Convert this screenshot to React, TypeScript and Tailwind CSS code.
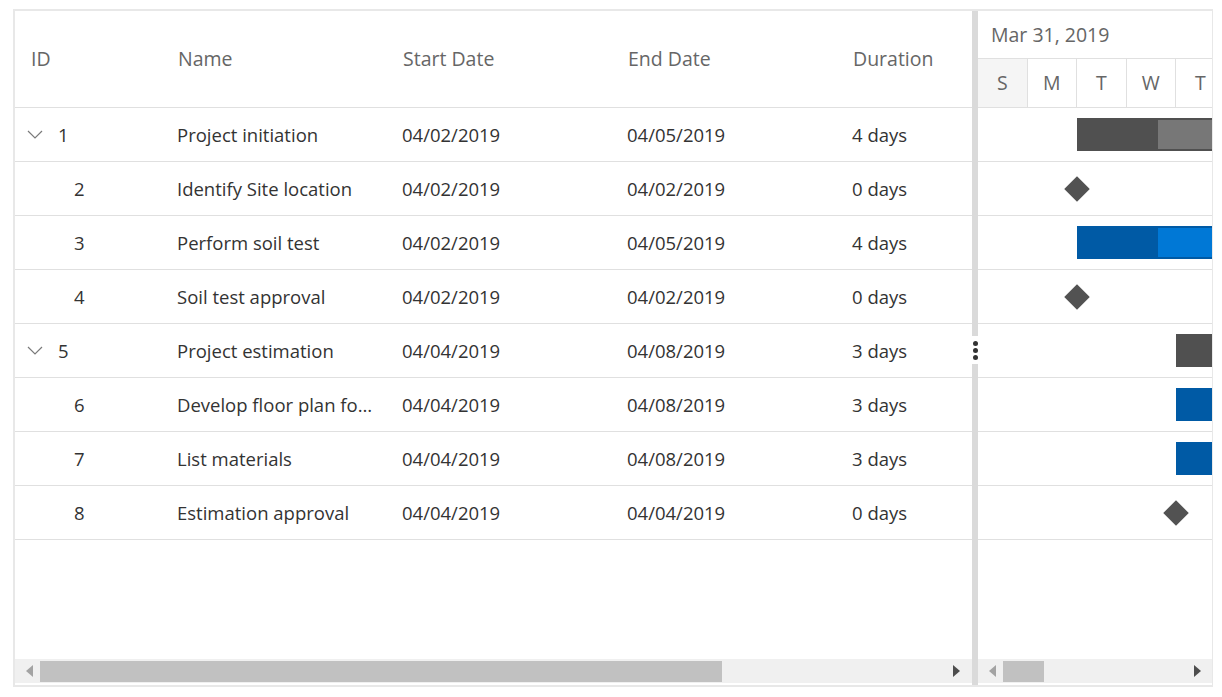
import React from 'react'

type Task = {
  id: number
  name: string
  start: string
  end: string
  duration: string
  parent?: boolean
  kind: 'parent' | 'task' | 'milestone'
  left: number
  width?: number
  progress?: number
}

const tasks: Task[] = [
  { id: 1, name: 'Project initiation', start: '04/02/2019', end: '04/05/2019', duration: '4 days', parent: true, kind: 'parent', left: 99, width: 198, progress: 81 },
  { id: 2, name: 'Identify Site location', start: '04/02/2019', end: '04/02/2019', duration: '0 days', kind: 'milestone', left: 99 },
  { id: 3, name: 'Perform soil test', start: '04/02/2019', end: '04/05/2019', duration: '4 days', kind: 'task', left: 99, width: 198, progress: 81 },
  { id: 4, name: 'Soil test approval', start: '04/02/2019', end: '04/02/2019', duration: '0 days', kind: 'milestone', left: 99 },
  { id: 5, name: 'Project estimation', start: '04/04/2019', end: '04/08/2019', duration: '3 days', parent: true, kind: 'parent', left: 198, width: 148, progress: 100 },
  { id: 6, name: 'Develop floor plan for estimation', start: '04/04/2019', end: '04/08/2019', duration: '3 days', kind: 'task', left: 198, width: 148, progress: 100 },
  { id: 7, name: 'List materials', start: '04/04/2019', end: '04/08/2019', duration: '3 days', kind: 'task', left: 198, width: 148, progress: 100 },
  { id: 8, name: 'Estimation approval', start: '04/04/2019', end: '04/04/2019', duration: '0 days', kind: 'milestone', left: 198 },
]

const days = ['S', 'M', 'T', 'W', 'T', 'F', 'S']

const Chevron = () => (
  <svg width="16" height="9" viewBox="0 0 16 9" className="shrink-0">
    <path d="M1 1 L8 8 L15 1" fill="none" stroke="#7a7a7a" strokeWidth="1.2" />
  </svg>
)

const ArrowLeft = ({ dark }: { dark?: boolean }) => (
  <svg width="7" height="12" viewBox="0 0 7 12">
    <path d="M7 0 L0 6 L7 12 Z" fill={dark ? '#4d4d4d' : '#a3a3a3'} />
  </svg>
)

const ArrowRight = ({ dark }: { dark?: boolean }) => (
  <svg width="7" height="12" viewBox="0 0 7 12">
    <path d="M0 0 L7 6 L0 12 Z" fill={dark ? '#4d4d4d' : '#a3a3a3'} />
  </svg>
)

const Bar = ({ t }: { t: Task }) => {
  if (t.kind === 'milestone') {
    return (
      <div
        className="absolute top-1/2 w-[18px] h-[18px] bg-[#525252] rotate-45"
        style={{ left: t.left - 9, marginTop: -9 }}
      />
    )
  }
  const isParent = t.kind === 'parent'
  return (
    <div
      className={`absolute top-[10px] h-[33px] border-2 ${isParent ? 'bg-[#777777] border-[#505050]' : 'bg-[#0078d6] border-[#005aa5]'}`}
      style={{ left: t.left, width: t.width }}
    >
      <div className={`h-full ${isParent ? 'bg-[#505050]' : 'bg-[#005aa5]'}`} style={{ width: t.progress ? t.progress - 2 : 0 }} />
    </div>
  )
}

export default function App() {
  return (
    <div className="w-[1222px] h-[697px] bg-white pt-[9px] pl-[13px]" style={{ fontFamily: '"Open Sans", "Noto Sans", sans-serif' }}>
      <div className="flex w-[1200px] h-[678px] border-2 border-r border-[#e8e8e8]">
        {/* grid */}
        <div className="flex flex-col w-[957px] overflow-hidden">
          <div className="flex-1 overflow-hidden">
            <div className="w-[1050px]">
              <div className="flex h-[97px] border-b border-[#e0e0e0] text-[19.5px] text-[#666666] items-center">
                <div className="w-[150px] pl-[16px]">ID</div>
                <div className="w-[225px] pl-[13px]">Name</div>
                <div className="w-[225px] pl-[13px]">Start Date</div>
                <div className="w-[225px] pl-[13px]">End Date</div>
                <div className="w-[225px] pl-[13px]">Duration</div>
              </div>
              {tasks.map(t => (
                <div key={t.id} className="flex h-[54px] border-b border-[#e0e0e0] text-[18.5px] text-[#333333] items-center">
                  <div className="w-[150px] flex items-center">
                    {t.parent ? (
                      <div className="flex items-center pl-[12px] gap-[15px]">
                        <Chevron />
                        <span>{t.id}</span>
                      </div>
                    ) : (
                      <span className="pl-[59px]">{t.id}</span>
                    )}
                  </div>
                  <div className="w-[225px] pl-[12px] pr-[14px] truncate">{t.name}</div>
                  <div className="w-[225px] pl-[12px]">{t.start}</div>
                  <div className="w-[225px] pl-[12px]">{t.end}</div>
                  <div className="w-[225px] pl-[12px]">{t.duration}</div>
                </div>
              ))}
            </div>
          </div>
          <div className="h-[24px] bg-[#f0f0f0] flex items-center mb-[2px]">
            <div className="w-[25px] flex justify-center pl-[4px]"><ArrowLeft /></div>
            <div className="w-[682px] h-[21px] bg-[#c1c1c1]" />
            <div className="flex-1" />
            <div className="w-[25px] flex justify-center pr-[6px]"><ArrowRight dark /></div>
          </div>
        </div>

        {/* splitter */}
        <div className="w-[6px] bg-[#dadada] flex flex-col">
          <div className="h-[325px]" />
          <div className="h-[28px] bg-white flex flex-col items-center justify-center gap-[2px]">
            <div className="w-[5px] h-[5px] rounded-full bg-[#333333]" />
            <div className="w-[5px] h-[5px] rounded-full bg-[#333333]" />
            <div className="w-[5px] h-[5px] rounded-full bg-[#333333]" />
          </div>
        </div>

        {/* chart */}
        <div className="flex flex-col w-[234px] overflow-hidden">
          <div className="flex-1 overflow-hidden">
            <div className="h-[48px] border-b border-[#e0e0e0] flex items-center pl-[13px] text-[19.5px] text-[#666666] whitespace-nowrap">
              Mar 31, 2019
            </div>
            <div className="flex h-[49px] border-b border-[#e0e0e0] w-[400px]">
              {days.map((d, i) => (
                <div
                  key={i}
                  className={`w-[49.5px] shrink-0 border-r border-[#e0e0e0] flex items-center justify-center text-[19.5px] text-[#666666] ${i === 0 || i === 6 ? 'bg-[#f5f5f5]' : ''}`}
                >
                  {d}
                </div>
              ))}
            </div>
            {tasks.map(t => (
              <div key={t.id} className="relative h-[54px] border-b border-[#e0e0e0]">
                <Bar t={t} />
              </div>
            ))}
          </div>
          <div className="h-[24px] bg-[#f0f0f0] flex items-center mb-[2px]">
            <div className="w-[25px] flex justify-center pl-[4px]"><ArrowLeft /></div>
            <div className="w-[41px] h-[21px] bg-[#c1c1c1]" />
            <div className="flex-1" />
            <div className="w-[25px] flex justify-center pr-[4px]"><ArrowRight dark /></div>
          </div>
        </div>
      </div>
    </div>
  )
}
